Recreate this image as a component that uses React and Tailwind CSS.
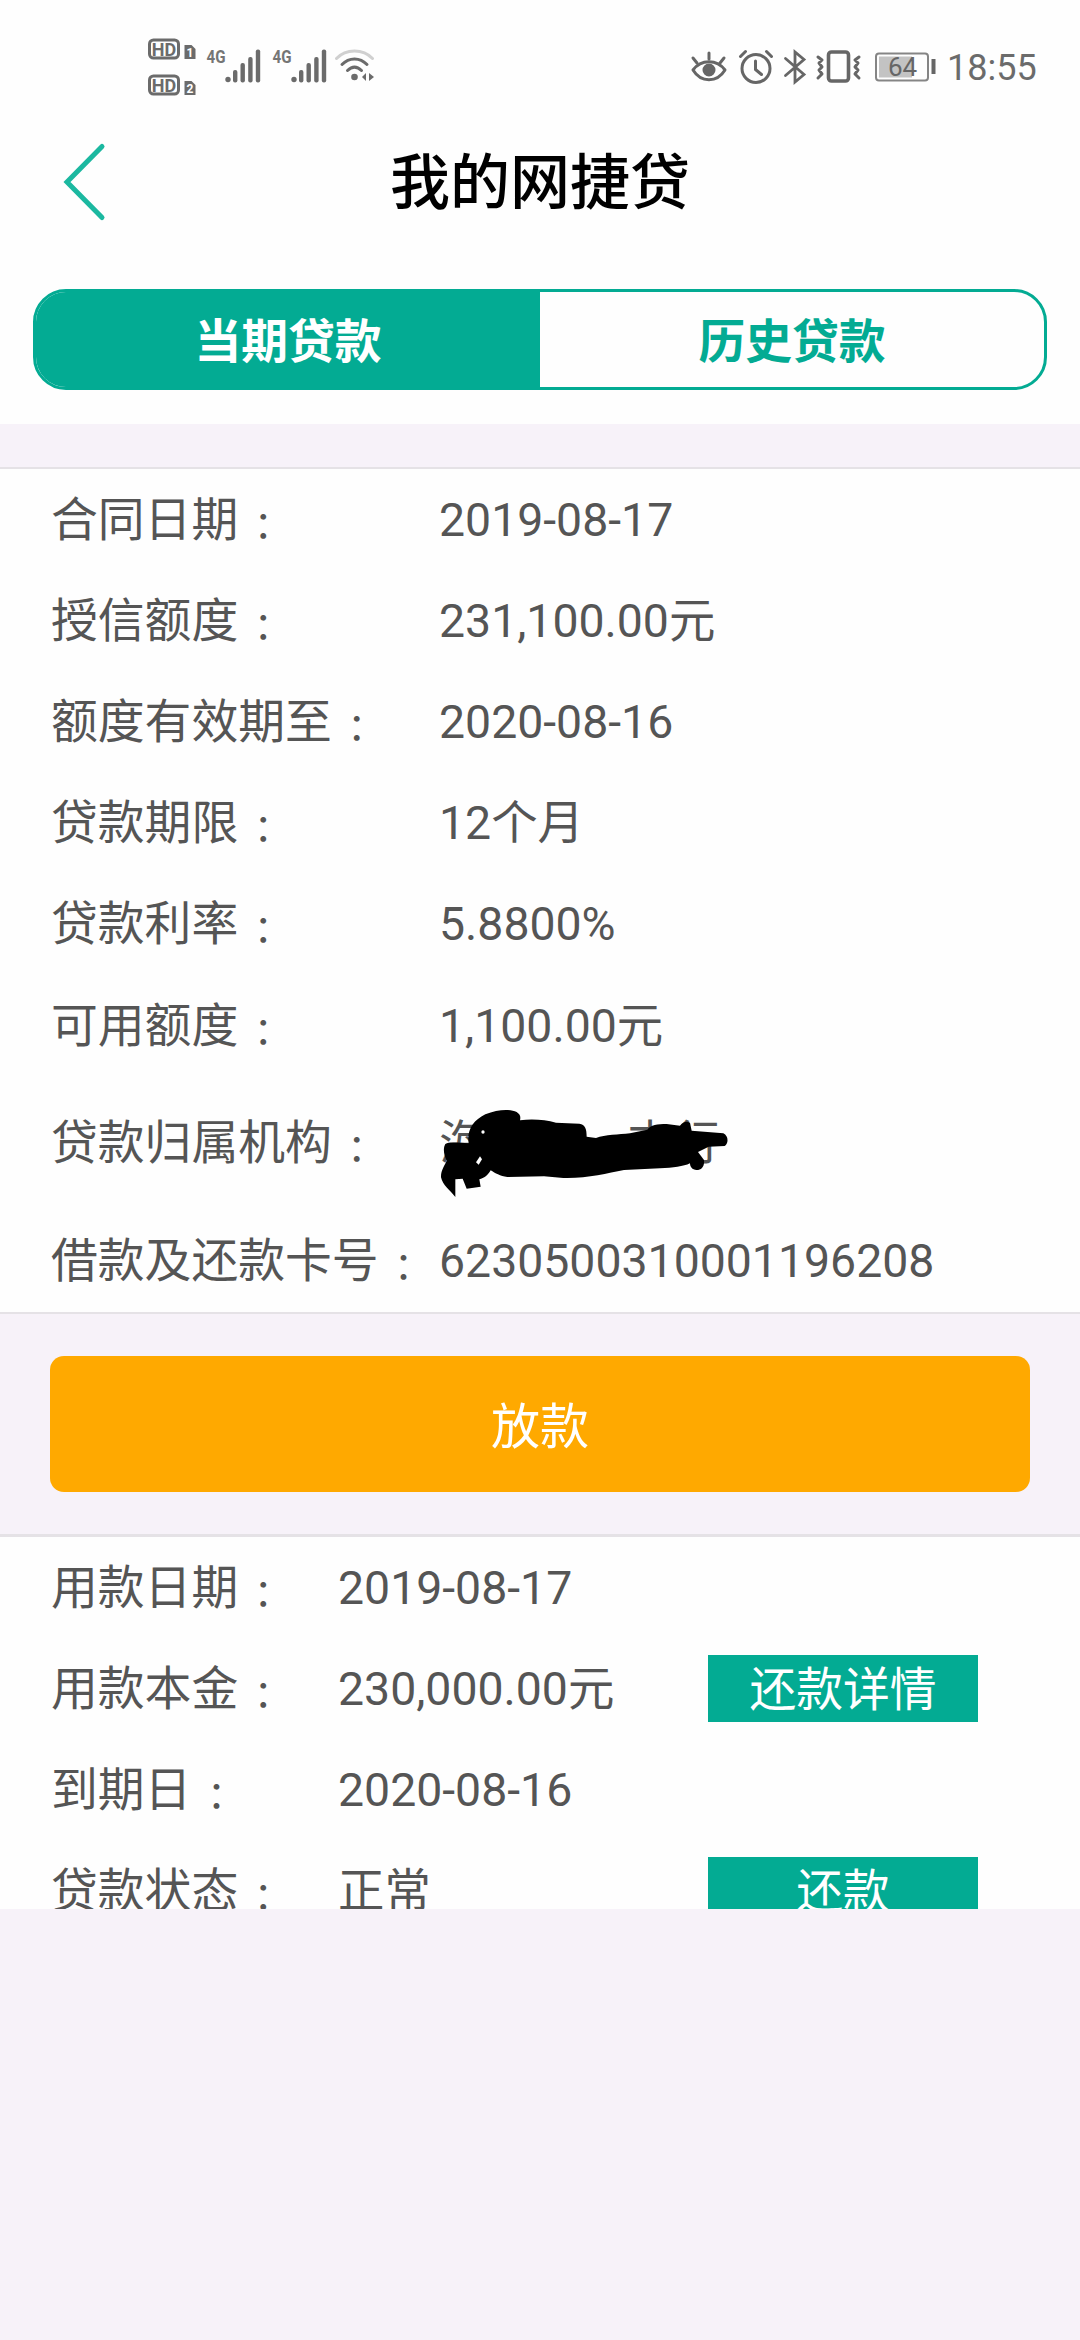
const contractRows = [
  { label: "合同日期", value: "2019-08-17" },
  { label: "授信额度", value: "231,100.00元" },
  { label: "额度有效期至", value: "2020-08-16" },
  { label: "贷款期限", value: "12个月" },
  { label: "贷款利率", value: "5.8800%" },
  { label: "可用额度", value: "1,100.00元" },
  { label: "贷款归属机构", masked: true },
  { label: "借款及还款卡号", value: "6230500310001196208" },
];

const usageRows = [
  { label: "用款日期", value: "2019-08-17" },
  { label: "用款本金", value: "230,000.00元", action: "还款详情" },
  { label: "到期日", value: "2020-08-16" },
  { label: "贷款状态", value: "正常", action: "还款" },
];

const HdBadge = ({ sim }) => (
  <svg className="overflow-visible" width="48" height="22" viewBox="0 0 48 22">
    <rect x="1.5" y="2" width="29" height="18" rx="4" fill="none" stroke="#6b6b6b" strokeWidth="3" />
    <text x="16" y="17.5" textAnchor="middle" fontFamily="Roboto" fontWeight="700" fontSize="18" fill="#6b6b6b">
      HD
    </text>
    <path d="M36.500 7h7l4 4v10H36.500z" fill="#6b6b6b" />
    <text x="42" y="18.5" textAnchor="middle" fontFamily="Roboto" fontWeight="700" fontSize="12" fill="#fff">
      {sim}
    </text>
  </svg>
);

const Signal = () => (
  <svg className="overflow-visible" width="56" height="36" viewBox="0 0 56 36">
    <text x="0.5" y="15" fontFamily="Roboto" fontWeight="700" fontSize="19" textLength="19" lengthAdjust="spacingAndGlyphs" fill="#757575">
      4G
    </text>
    <g fill="#6b6b6b">
      <circle cx="22" cy="31.5" r="2.7" />
      <rect x="27" y="22" width="4.4" height="12.5" rx="2" />
      <rect x="34.5" y="15" width="4.4" height="19.5" rx="2" />
      <rect x="42.2" y="9" width="4.4" height="25.5" rx="2" />
      <rect x="49.8" y="1.5" width="4.4" height="33" rx="2" />
    </g>
  </svg>
);

const Wifi = () => (
  <svg width="40" height="34" viewBox="0 0 40 34" fill="none" strokeLinecap="round">
    <path d="M1.5 9.5C11-.5 28-.5 37.500 9.500" stroke="#d0d0d0" strokeWidth="3" />
    <path d="M7 15.500C14 8 25 8 32 15.500" stroke="#6b6b6b" strokeWidth="3" />
    <path d="M12.500 21.500C17 17 22 17 26.500 21.500" stroke="#6b6b6b" strokeWidth="3" />
    <circle cx="19.500" cy="28" r="3.300" fill="#6b6b6b" />
    <path d="M31 24v8l-4-4zM34 24v8l5-4z" fill="#6b6b6b" />
  </svg>
);

const StatusIcons = () => (
  <svg width="246" height="36" viewBox="0 0 246 36" fill="none" stroke="#666" strokeWidth="3" strokeLinecap="round" strokeLinejoin="round">
    {/* eye comfort */}
    <path d="M3 21C11 10 27 10 35 21C27 34 11 34 3 21z" />
    <circle cx="19" cy="21" r="5" fill="#666" />
    <path d="M19 4v6M3 9l4 5M34 9l-4 5" />
    {/* alarm */}
    <circle cx="66" cy="19.500" r="14" />
    <path d="M65.500 12v8.500l6 5M50.500 7.500l5-5M76.500 2.500l5 5" />
    {/* bluetooth */}
    <path d="M95.500 9.500l18.500 16-9 7.500V3l9 7.500-18.500 16" strokeWidth="2.800" strokeLinejoin="miter" />
    {/* vibrate */}
    <rect x="138.500" y="3" width="20" height="29" rx="3" strokeWidth="3.600" />
    <path d="M128 8l4 3-3 3 3 4-3 3 3 4-4 4M169 8l-4 3 3 3-3 4 3 3-3 4 4 4" />
    {/* battery */}
    <rect x="186" y="4.500" width="52" height="27" rx="3" stroke="#858585" strokeWidth="2" />
    <rect x="189" y="7.500" width="33" height="21" fill="#c3c3c3" stroke="none" />
    <path d="M243.500 10v15" strokeWidth="4" strokeLinecap="butt" />
    <text x="212.500" y="27" textAnchor="middle" fontFamily="Roboto" fontSize="26" fill="#666" stroke="none">
      64
    </text>
  </svg>
);

const StatusBar = () => (
  <div className="flex h-[132px] items-start justify-between pt-[38px] pr-[43px] pl-[148px] text-[#6b6b6b]">
    <div className="flex items-start">
      <div className="flex flex-col gap-[14px]">
        <HdBadge sim="1" />
        <HdBadge sim="2" />
      </div>
      <div className="flex gap-[10px] pt-[10px] pl-[10px]">
        <Signal />
        <Signal />
      </div>
      <div className="pt-[11px] pl-[7px]">
        <Wifi />
      </div>
    </div>
    <div className="flex items-start gap-[11px] pt-[11px]">
      <StatusIcons />
      <span className="w-[90px] pt-px font-[Roboto] text-[36px] leading-[36px] whitespace-nowrap">18:55</span>
    </div>
  </div>
);

// Hand-drawn strokes that hide the branch name
const Scribble = () => (
  <svg className="absolute top-[-14px] left-[-19px]" width="330" height="120" viewBox="0 0 990 360">
    <path
      d="M146 160C140 122 158 92 196 73C232 58 270 56 290 66C302 74 302 82 300 91C340 86 376 90 408 98L478 101C496 104 500 116 500 140L528 144C556 134 596 134 630 130L682 119C692 104 712 102 740 102L780 107C788 96 800 92 810 98L815 122L910 130C926 138 926 160 914 168L866 170L834 186L852 210C854 230 844 240 830 240C816 240 810 230 810 220C790 230 760 233 720 235L612 240C560 250 500 266 430 264L372 259L262 261C240 258 226 250 212 241C204 256 192 264 178 268L182 290L140 296L128 266L106 268L106 321C90 300 68 286 63 262C62 242 74 226 80 212C72 196 68 176 76 162C90 154 120 160 146 160z"
      fill="#000"
    />
    <circle cx="189" cy="126" r="5" fill="#fff" />
    <path d="M168 217l12-18 6 9-10 16z" fill="#fff" />
  </svg>
);

const Row = ({ row, labelWidth, height }) => (
  <div className={`flex shrink-0 items-center pl-[51px] ${height}`}>
    <div className={`flex h-[60px] shrink-0 whitespace-nowrap ${labelWidth}`}>
      <span>{row.label}</span>
      <span className="pt-[4px] pl-[6px] font-['Noto_Sans_CJK_TC',sans-serif] text-[38px]" lang="zh-TW">
        ：
      </span>
    </div>
    {row.masked ? (
      <div className="relative flex h-[78px] items-center gap-[141px]">
        <span>海</span>
        <span>支行</span>
        <Scribble />
      </div>
    ) : (
      <div className="w-[370px] text-[46.4px] whitespace-nowrap">{row.value}</div>
    )}
    {row.action && (
      <button className="h-[67px] w-[270px] bg-[#03ab93] pt-[3px] leading-[64px] text-white">{row.action}</button>
    )}
  </div>
);

const App = () => {
  return (
    <div
      lang="zh-CN"
      className="flex h-[2340px] w-[1080px] flex-col overflow-hidden bg-[#f7f2f9] font-[Roboto,'Noto_Sans_CJK_SC',sans-serif] text-[46.8px] leading-[60px] text-[#555]"
    >
      <header className="h-[424px] shrink-0 bg-[#fefefe]">
        <StatusBar />
        <div className="grid h-[100px] grid-cols-[1fr_auto_1fr] items-center">
          <svg className="ml-[62px]" width="44" height="80" viewBox="0 0 44 80" fill="none">
            <path d="M40 4.500L5 40L40 75.500" stroke="#1bb8a0" strokeWidth="5" strokeLinecap="round" />
          </svg>
          <h1 className="pt-[3px] text-[60px] leading-[97px] font-medium text-black">我的网捷贷</h1>
        </div>
        <div className="mx-[33px] mt-[57px] flex h-[101px] overflow-hidden rounded-[33px] border-[3px] border-[#03ab93] text-center font-bold">
          <button className="flex-1 bg-[#03ab93] pt-[4px] text-white">当期贷款</button>
          <button className="flex-1 pt-[4px] text-[#03ab93]">历史贷款</button>
        </div>
      </header>

      <section className="mt-[43px] h-[847px] shrink-0 border-y-2 border-[#e5e2e6] bg-[#fefefe]">
        {contractRows.map((row) => (
          <Row
            key={row.label}
            row={row}
            labelWidth="w-[388px]"
            height={row.masked ? "h-[134px]" : "h-[101.200px]"}
          />
        ))}
      </section>

      <button className="mx-[50px] mt-[42px] h-[136px] shrink-0 rounded-[14px] bg-[#ffa900] pt-[8px] text-[49px] text-white">
        放款
      </button>

      <section className="mt-[42px] h-[375px] shrink-0 overflow-hidden border-t-[3px] border-[#e5e2e6] bg-[#fefefe]">
        {usageRows.map((row) => (
          <Row key={row.label} row={row} labelWidth="w-[287px]" height="h-[101px]" />
        ))}
      </section>
    </div>
  );
};

export default App;
